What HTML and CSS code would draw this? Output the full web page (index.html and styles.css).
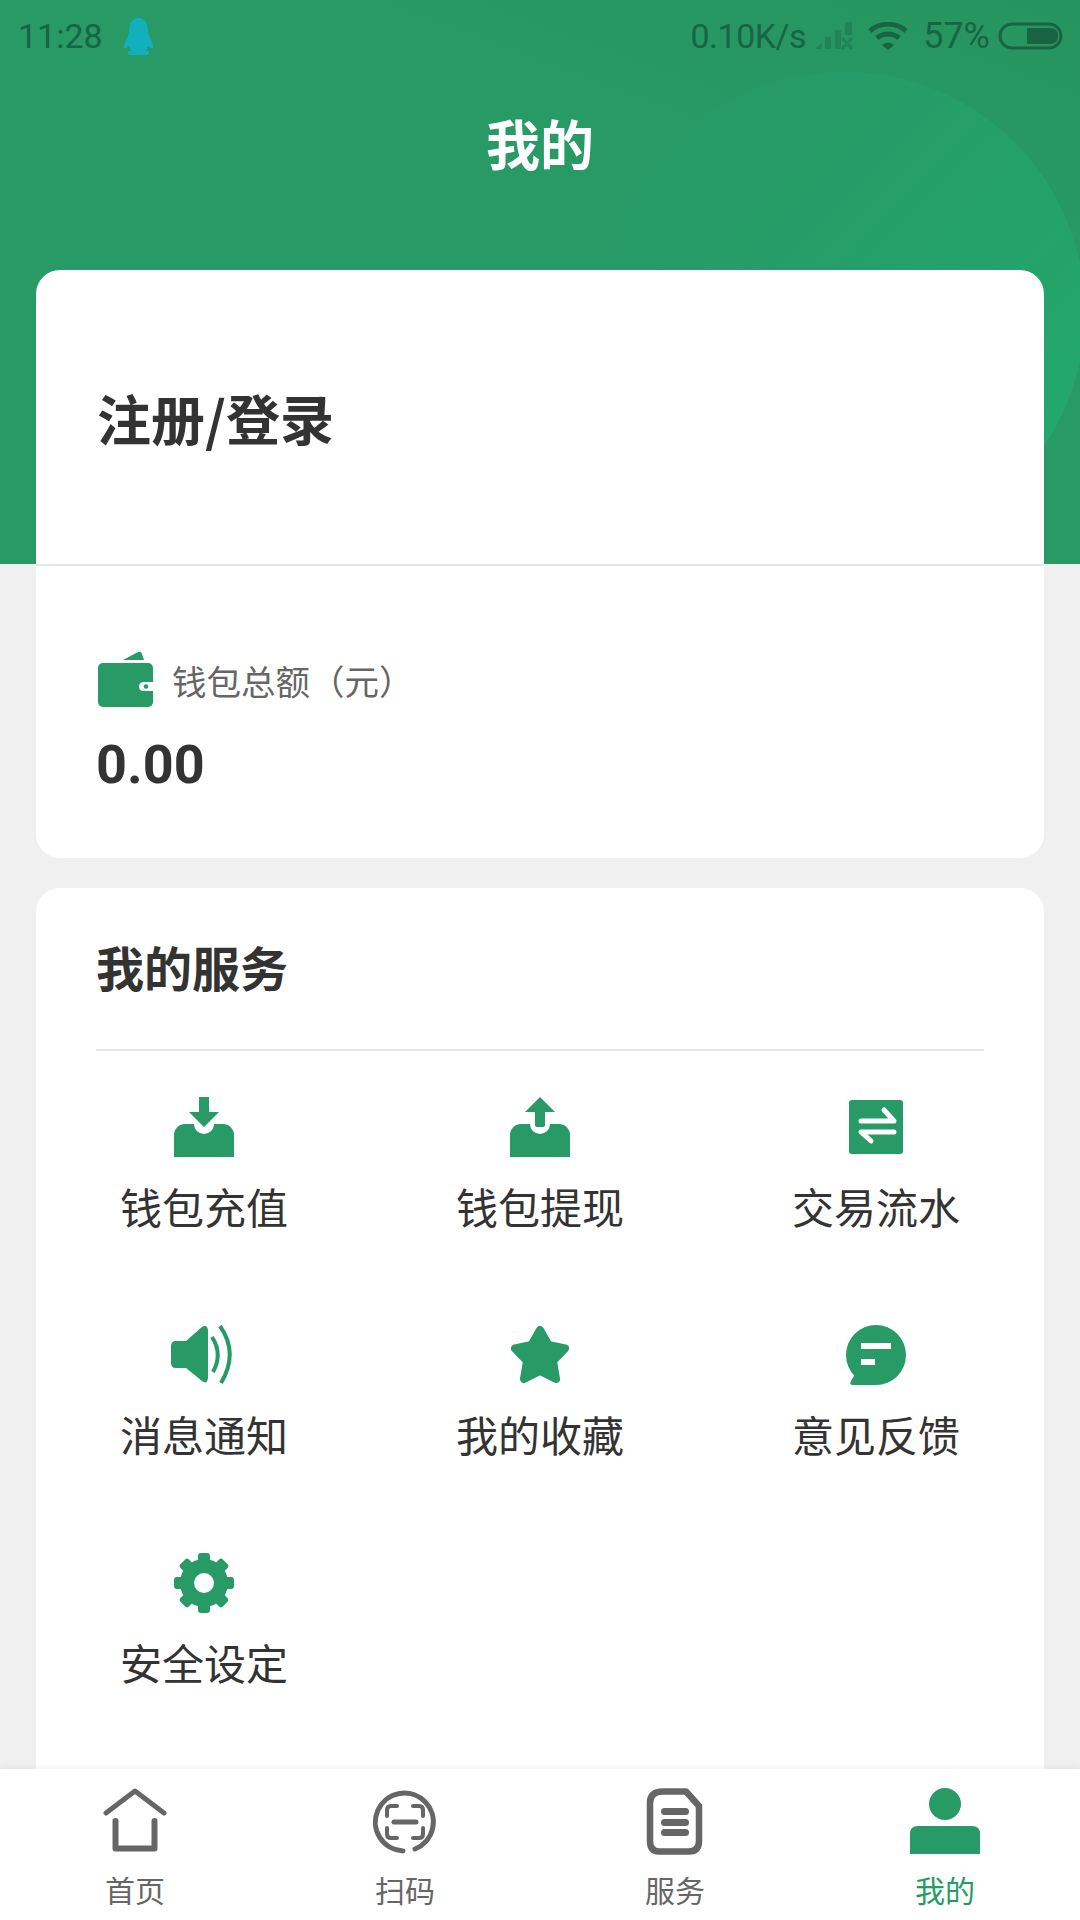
FILE: index.html
```html
<!DOCTYPE html>
<html lang="zh-CN">

<head>
    <meta charset="UTF-8">
    <meta name="viewport" content="width=device-width, initial-scale=1.0">
    <title>我的</title>
    <link rel="stylesheet" href="styles.css">
</head>

<body>
    <div class="page">
        <div class="main">
            <!-- 顶部绿色区域 -->
            <div class="header">
                <div class="header-circle"></div>
                <div class="statusbar">
                    <span class="time">11:28</span>
                    <svg class="qq" width="31" height="37" viewBox="0 0 31 37">
                        <path fill="#12b0bc" d="M15.5 0C8 0 6 7 6 13C6 16 4 20 1 27C0 30 1 31 3 30L6 28C7 30 7 32 9 33H5V35Q5 37 8 37H23Q26 37 26 35V33H22C24 32 24 30 25 28L28 30C30 31 31 30 30 27C27 20 25 16 25 13C25 7 23 0 15.5 0Z" />
                    </svg>
                    <span class="spacer"></span>
                    <span class="speed">0.10K/s</span>
                    <svg class="signal" width="38" height="28" viewBox="0 0 38 28">
                        <g fill="#218459">
                            <path d="M0 27L7 21V27Z" />
                            <rect x="10" y="15" width="6" height="12" rx="1" />
                            <rect x="20" y="8" width="6" height="19" rx="1" />
                            <rect x="30" y="0" width="7" height="13" rx="1" />
                        </g>
                        <path d="M27 16L37 27M37 16L27 27" stroke="#218459" stroke-width="3" fill="none" />
                    </svg>
                    <svg class="wifi" width="40" height="28" viewBox="0 0 40 28">
                        <g fill="none" stroke="#1a6343" stroke-width="5">
                            <path d="M2 9A27 27 0 0 1 38 9" />
                            <path d="M9 16A17 17 0 0 1 31 16" />
                        </g>
                        <path fill="#1a6343" d="M14 23Q20 18 26 23L20 28Z" />
                    </svg>
                    <span class="battery-num">57%</span>
                    <svg class="battery" width="65" height="28" viewBox="0 0 65 28">
                        <rect x="2" y="2" width="61" height="24" rx="12" fill="none" stroke="#1a6343" stroke-width="3" />
                        <path fill="#1a6343" d="M29 6H52Q60 6 60 14Q60 22 52 22H29Z" />
                    </svg>
                </div>
                <div class="title">我的</div>
            </div>

            <div class="content">
                <!-- 账户卡片 -->
                <div class="card account">
                    <div class="login">注册/登录</div>
                    <div class="wallet">
                        <div class="wallet-label">
                            <svg width="55" height="55" viewBox="0 0 55 55">
                                <path fill="#279a66" d="M25 8L40 0Q43 -1 44 2L46 8Z" />
                                <rect y="11" width="55" height="44" rx="5" fill="#279a66" />
                                <path fill="#fff" d="M55 30H46Q41 30 41 34.500Q41 39 46 39H55Z" />
                                <circle cx="48" cy="34.500" r="2.300" fill="#279a66" />
                            </svg>
                            <span>钱包总额（元）</span>
                        </div>
                        <div class="wallet-value">0.00</div>
                    </div>
                </div>

                <!-- 我的服务 -->
                <div class="card service">
                    <div class="service-title">我的服务</div>
                    <div class="grid">
                        <div class="grid-item">
                            <svg width="60" height="60" viewBox="0 0 60 60">
                                <path fill="#279a66" d="M0 60V38A11 11 0 0 1 11 27H20A10 10 0 0 0 40 27H49A11 11 0 0 1 60 38V60Z" />
                                <path fill="#279a66" d="M25 0H35V15H45L30 30L15 15H25Z" />
                            </svg>
                            <span>钱包充值</span>
                        </div>
                        <div class="grid-item">
                            <svg width="60" height="60" viewBox="0 0 60 60">
                                <path fill="#279a66" d="M0 60V38A11 11 0 0 1 11 27H20A10 10 0 0 0 40 27H49A11 11 0 0 1 60 38V60Z" />
                                <path fill="#279a66" d="M30 0L45 15H35V28Q35 30 33 30H27Q25 30 25 28V15H15Z" />
                            </svg>
                            <span>钱包提现</span>
                        </div>
                        <div class="grid-item">
                            <svg width="60" height="60" viewBox="0 0 60 60">
                                <rect x="3" y="3" width="54" height="54" rx="3" fill="#279a66" />
                                <path d="M15 24H48L38 13M48 35H15L25 44" fill="none" stroke="#fff" stroke-width="5" stroke-linecap="round" stroke-linejoin="round" />
                            </svg>
                            <span>交易流水</span>
                        </div>
                        <div class="grid-item">
                            <svg width="66" height="60" viewBox="0 0 66 60">
                                <path fill="#279a66" d="M5 16H15L31 2Q36 -1 37 5V53Q36 60 31 56L15 43H5Q0 43 0 38V21Q0 16 5 16Z" />
                                <path d="M41 12Q52 29 42 47M49 1Q68 28 50 58" fill="none" stroke="#279a66" stroke-width="4" />
                            </svg>
                            <span>消息通知</span>
                        </div>
                        <div class="grid-item">
                            <svg width="60" height="60" viewBox="0 0 60 60">
                                <polygon points="30,5 38.500,20 55,23.500 43,36 46,54 30,46 14,54 17,36 5,23.500 21.500,20" fill="#279a66" stroke="#279a66" stroke-width="8" stroke-linejoin="round" />
                            </svg>
                            <span>我的收藏</span>
                        </div>
                        <div class="grid-item">
                            <svg width="60" height="60" viewBox="0 0 60 60">
                                <circle cx="30" cy="30" r="30" fill="#279a66" />
                                <path fill="#279a66" d="M30 60H7Q3 60 5 56L9 49Z" />
                                <rect x="15" y="18" width="30" height="6" fill="#fff" />
                                <rect x="15" y="34" width="14" height="6" fill="#fff" />
                            </svg>
                            <span>意见反馈</span>
                        </div>
                        <div class="grid-item">
                            <svg width="60" height="60" viewBox="0 0 60 60">
                                <g fill="#279a66" transform="translate(30 30)">
                                    <circle r="24" />
                                    <rect x="-6" y="-30" width="12" height="12" rx="3" />
                                    <rect x="-6" y="-30" width="12" height="12" rx="3" transform="rotate(45)" />
                                    <rect x="-6" y="-30" width="12" height="12" rx="3" transform="rotate(90)" />
                                    <rect x="-6" y="-30" width="12" height="12" rx="3" transform="rotate(135)" />
                                    <rect x="-6" y="-30" width="12" height="12" rx="3" transform="rotate(180)" />
                                    <rect x="-6" y="-30" width="12" height="12" rx="3" transform="rotate(225)" />
                                    <rect x="-6" y="-30" width="12" height="12" rx="3" transform="rotate(270)" />
                                    <rect x="-6" y="-30" width="12" height="12" rx="3" transform="rotate(315)" />
                                    <circle r="10" fill="#fff" />
                                </g>
                            </svg>
                            <span>安全设定</span>
                        </div>
                    </div>
                </div>
            </div>
        </div>

        <!-- 底部导航 -->
        <div class="tabbar">
            <div class="tab">
                <svg width="72" height="68" viewBox="0 0 72 68">
                    <path d="M7 25L36 3L65 25" fill="none" stroke="#666" stroke-width="5" stroke-linecap="round" stroke-linejoin="round" />
                    <path d="M16.500 33V60.500H55.500V33" fill="none" stroke="#666" stroke-width="6" stroke-linecap="round" stroke-linejoin="round" />
                </svg>
                <span>首页</span>
            </div>
            <div class="tab">
                <svg width="72" height="68" viewBox="0 0 72 68">
                    <g fill="none" stroke="#666" stroke-linecap="round">
                        <path stroke-width="5" d="M34 63A29 29 0 1 1 46 61" />
                        <path stroke-width="4" d="M28 18H22Q18 18 18 22V28M44 18H50Q54 18 54 22V28M28 50H22Q18 50 18 46V40M44 50H50Q54 50 54 46V40" />
                        <path stroke-width="5" d="M25 34H47" />
                    </g>
                </svg>
                <span>扫码</span>
            </div>
            <div class="tab">
                <svg width="72" height="68" viewBox="0 0 72 68">
                    <path d="M24 3.500H47L60 18V53Q60 63.500 50 63.500H20Q11 63.500 11 53V15Q11 3.500 24 3.500Z" fill="none" stroke="#666" stroke-width="6.500" stroke-linejoin="round" />
                    <g fill="#666">
                        <rect x="22" y="20" width="28" height="7" rx="3.500" />
                        <rect x="22" y="31" width="28" height="7" rx="3.500" />
                        <rect x="22" y="41" width="28" height="7" rx="3.500" />
                    </g>
                </svg>
                <span>服务</span>
            </div>
            <div class="tab active">
                <svg width="72" height="68" viewBox="0 0 72 68">
                    <circle cx="36" cy="16" r="16" fill="#279a66" />
                    <path fill="#279a66" d="M1 66V46Q1 38 9 38H63Q71 38 71 46V66Z" />
                </svg>
                <span>我的</span>
            </div>
        </div>
    </div>
</body>

</html>
```

FILE: styles.css
```css
* {
    margin: 0;
    padding: 0;
    box-sizing: border-box;
}

body {
    font-family: "Noto Sans CJK SC", "Noto Sans", sans-serif;
    background-color: #f0f0f0;
    color: #333;
}

.page {
    display: flex;
    flex-direction: column;
    height: 1920px;
    overflow: hidden;
}

.main {
    flex: 1;
    min-height: 0;
    overflow: hidden;
}

/* 顶部绿色区域 */
.header {
    position: relative;
    height: 564px;
    overflow: hidden;
    background: linear-gradient(200deg, #26945f 0%, #279a66 30%, #279a66 100%);
}

.header-circle {
    position: absolute;
    left: 605px;
    top: 72px;
    width: 480px;
    height: 480px;
    border-radius: 50%;
    background: linear-gradient(135deg, #279b67 25%, #22a76c 85%);
}

.statusbar {
    position: relative;
    display: flex;
    align-items: center;
    height: 72px;
    padding: 0 17px 0 18px;
    font-family: Roboto, sans-serif;
    font-size: 34px;
    color: #1a6343;
}

.qq {
    margin-left: 20px;
}

.spacer {
    flex: 1;
}

.speed {
    letter-spacing: -0.5px;
}

.signal {
    margin-left: 9px;
}

.wifi {
    margin-left: 15px;
}

.battery-num {
    margin-left: 15px;
    font-size: 36px;
}

.battery {
    margin-left: 8px;
}

.title {
    position: relative;
    height: 146px;
    line-height: 142px;
    text-align: center;
    font-size: 54px;
    font-weight: 700;
    color: #fff;
}

/* 卡片 */
.content {
    position: relative;
    margin-top: -294px;
    padding: 0 36px;
}

.card {
    background-color: #fff;
    border-radius: 24px;
}

.account {
    height: 588px;
    margin-bottom: 30px;
}

.login {
    height: 296px;
    padding: 0 61px;
    line-height: 295px;
    font-size: 54px;
    font-weight: 700;
    border-bottom: 2px solid #e5e5e5;
}

.wallet {
    padding: 86px 60px 0 62px;
}

.wallet-label {
    display: flex;
    align-items: flex-end;
    font-size: 34.500px;
    line-height: 50px;
    color: #666;
}

.wallet-label span {
    margin-left: 19px;
    margin-bottom: 2px;
}

.wallet-value {
    margin-top: 25px;
    margin-left: -2px;
    font-family: Roboto, sans-serif;
    font-size: 54px;
    font-weight: 700;
    line-height: 66px;
}

.service {
    height: 1000px;
    padding: 0 60px;
}

.service-title {
    height: 163px;
    line-height: 156px;
    font-size: 48px;
    font-weight: 700;
    border-bottom: 2px solid #e5e5e5;
}

.grid {
    display: grid;
    grid-template-columns: repeat(3, 336px);
    grid-auto-rows: 228px;
    margin: 0 -60px;
    padding-top: 46px;
}

.grid-item {
    display: flex;
    flex-direction: column;
    align-items: center;
    font-size: 42px;
    color: #333;
}

.grid-item span {
    margin-top: 20px;
    line-height: 58px;
}

/* 底部导航 */
.tabbar {
    position: relative;
    display: grid;
    grid-template-columns: repeat(4, 1fr);
    height: 151px;
    background-color: #fff;
    box-shadow: 0 -2px 8px rgba(0, 0, 0, 0.05);
}

.tab {
    display: flex;
    flex-direction: column;
    align-items: center;
    padding-top: 19px;
    font-size: 30px;
    line-height: 40px;
    color: #666;
}

.tab span {
    margin-top: 13px;
}

.tab.active {
    color: #279a66;
}
```
